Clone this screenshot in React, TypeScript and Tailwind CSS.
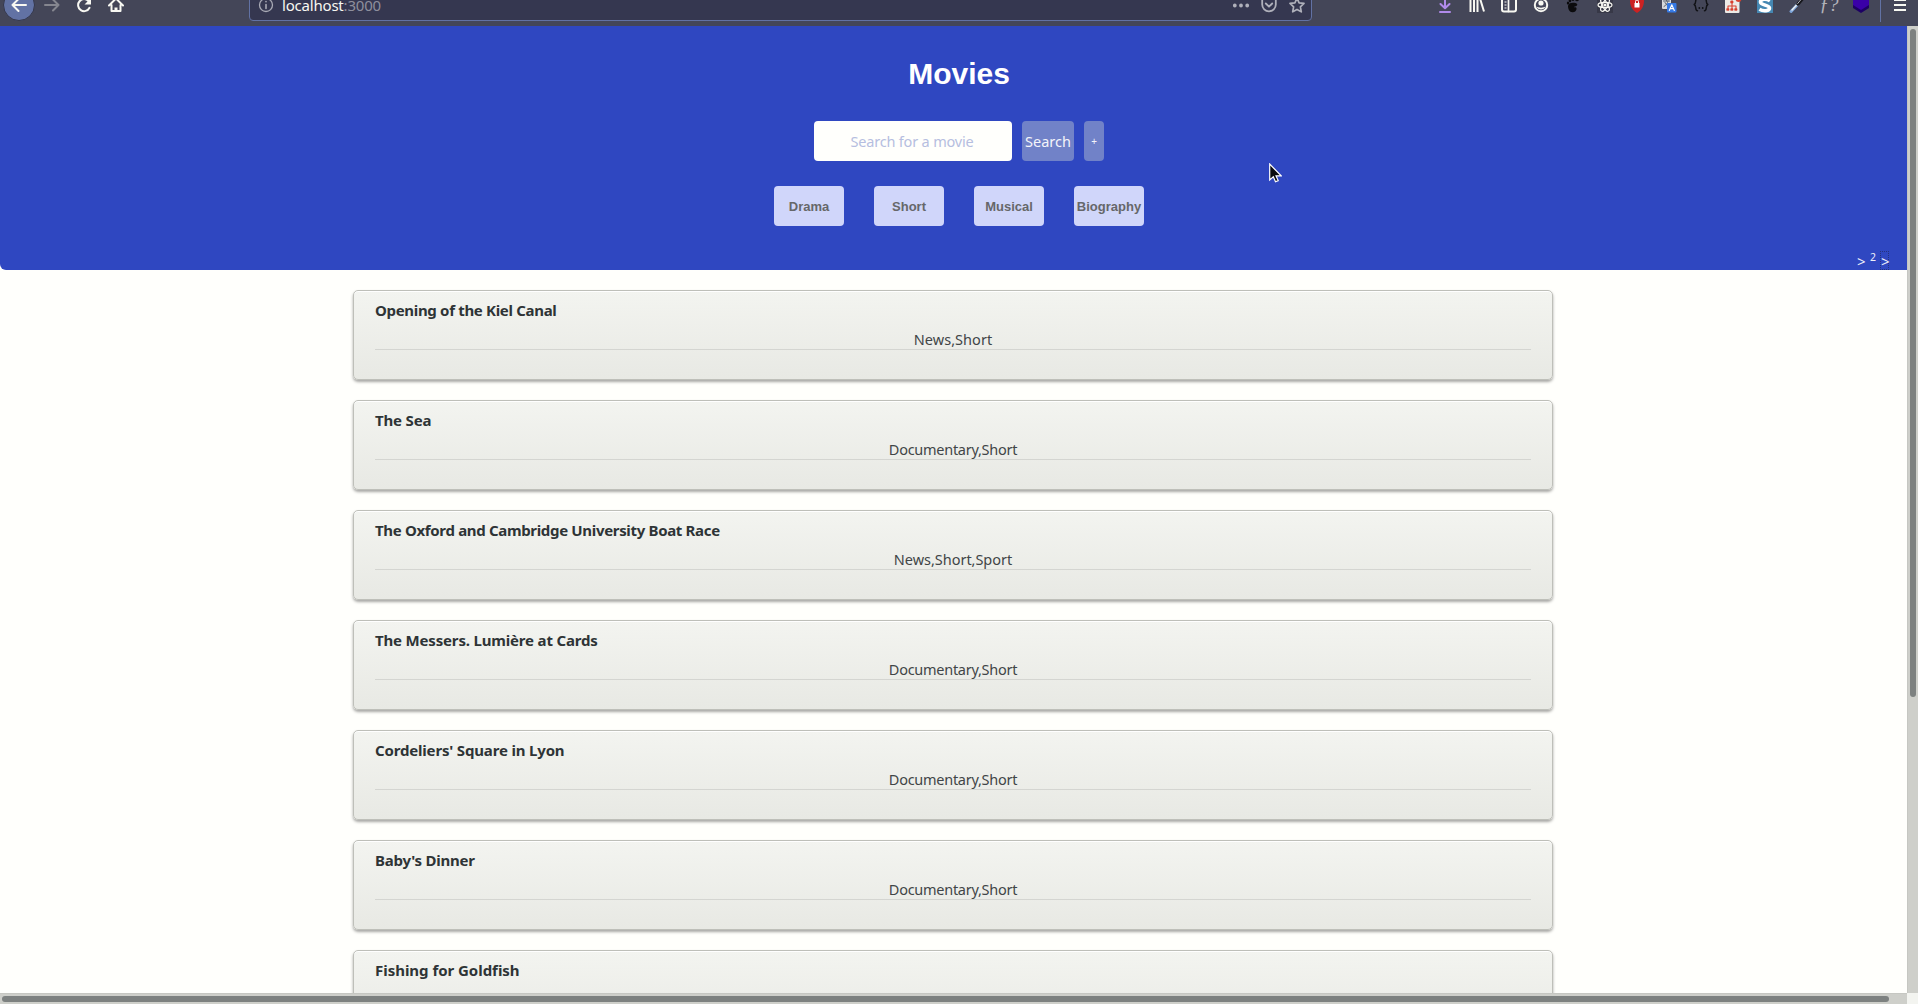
import React from 'react';

type IconProps = { children: React.ReactNode; className?: string };

const Icon = ({ children, className = '' }: IconProps) => (
  <span className={`flex w-8 shrink-0 justify-center ${className}`}>
    <svg
      width="16"
      height="16"
      viewBox="0 0 16 16"
      fill="none"
      stroke="currentColor"
      strokeWidth="2"
      strokeLinecap="round"
      strokeLinejoin="round"
      overflow="visible"
    >
      {children}
    </svg>
  </span>
);

const movies = [
  { title: 'Opening of the Kiel Canal', genres: 'News,Short', fit: 'tracking-[-0.32px]', genreFit: 'tracking-[0.04px]' },
  { title: 'The Sea', genres: 'Documentary,Short', fit: 'tracking-[-0.17px]', genreFit: 'tracking-[-0.27px]' },
  { title: 'The Oxford and Cambridge University Boat Race', genres: 'News,Short,Sport', fit: 'tracking-[-0.33px]', genreFit: 'tracking-[-0.03px]' },
  { title: 'The Messers. Lumière at Cards', genres: 'Documentary,Short', fit: 'tracking-[-0.17px]', genreFit: 'tracking-[-0.27px]' },
  { title: "Cordeliers' Square in Lyon", genres: 'Documentary,Short', fit: 'tracking-[-0.17px]', genreFit: 'tracking-[-0.27px]' },
  { title: "Baby's Dinner", genres: 'Documentary,Short', fit: 'tracking-[-0.25px]', genreFit: 'tracking-[-0.27px]' },
  { title: 'Fishing for Goldfish', genres: 'Documentary,Short', fit: 'tracking-[-0.03px]', genreFit: 'tracking-[-0.27px]' },
];

const genres = ['Drama', 'Short', 'Musical', 'Biography'];

function Toolbar() {
  return (
    <div className="h-[26px] shrink-0 overflow-hidden bg-[#444658]">
      <div className="-mt-[11px] flex h-8 items-center text-[#f8f8f2]">
        <div className="ml-[3px] flex size-8 shrink-0 items-center justify-center rounded-full border border-[#35374a] bg-[#6272a4]">
          <Icon>
            <path d="M15 8H1.500M7.500 2L1.500 8l6 6" />
          </Icon>
        </div>
        <Icon className="ml-[1px] text-[#85868f]">
          <path d="M1 8h13.500M9 2.500L14.500 8 9 13.500" />
        </Icon>
        <Icon>
          <path d="M13.500 10.800A6 6 0 1 1 12.500 4" />
          <path d="M15 1v6.500H8.500z" fill="currentColor" stroke="none" />
        </Icon>
        <Icon>
          <path d="M1 8.500L8 1.500l7 7M3.500 8v6h9V8" />
          <path d="M8 14v-3.500" strokeWidth="3" strokeLinecap="butt" />
        </Icon>
        <div className="ml-[117px] flex h-[31px] w-[1063px] shrink-0 items-center rounded-[4px] border border-[#6272a4] bg-[#353750] pb-px">
          <Icon className="text-[#a9aab5]">
            <circle cx="8" cy="8" r="6.500" strokeWidth="1.300" />
            <path d="M8 7.500v4M8 4.500v.2" strokeWidth="1.600" />
          </Icon>
          <span className="font-['Noto_Sans'] text-[15px] leading-5 tracking-[-0.2px] text-[#f8f8f2]">
            localhost<span className="text-[#8e8f9d]">:3000</span>
          </span>
          <div className="ml-auto flex items-center text-[#afb0ba]">
            <Icon className="!w-7">
              <path d="M1.800 8.500h.01M8 8.500h.01M14.200 8.500h.01" strokeWidth="3.800" />
            </Icon>
            <Icon className="!w-7">
              <path d="M1.200 2h13.600v5.500a6.800 6.800 0 0 1-13.600 0zM4.800 6.500L8 9.700l3.200-3.200" strokeWidth="1.800" />
            </Icon>
            <Icon className="!w-7">
              <path d="M8 1.200l2.100 4.600 4.900.6-3.600 3.400.9 5L8 12.400l-4.300 2.400.9-5L1 6.400l4.900-.6z" strokeWidth="1.700" />
            </Icon>
          </div>
        </div>
        <div className="ml-[117px] flex items-center">
          <Icon className="text-[#b08aea]">
            <path d="M8 0v11M3.500 7L8 11.300 12.500 7M3 15h10" />
          </Icon>
          <Icon>
            <path d="M1.500 1v14M5 1v14M8.500 1v14M11 1.500l4 13" strokeLinecap="butt" />
          </Icon>
          <Icon>
            <rect x="1" y="1" width="14" height="13.500" rx="2" />
            <path d="M7.500 1v13.500" strokeWidth="1.700" />
            <path d="M3.500 5h2M3.500 8h2M3.500 11h2" strokeWidth="1" strokeLinecap="butt" />
          </Icon>
          <Icon>
            <circle cx="8" cy="8" r="6.200" />
            <circle cx="8" cy="6" r="2.600" fill="currentColor" stroke="none" />
            <path d="M3.500 9.500c1.500 1.500 7.500 1.500 9 0-1 4-8 4-9 0z" fill="currentColor" stroke="none" />
          </Icon>
          <Icon className="text-[#0b0b0d]">
            <g fill="currentColor" stroke="none">
              <path d="M3 9c0-3 4-4 7.500-3 3.200 1 1.500 3.300-.5 3.500-1.600.2-1.500 1 .3.700 2.200-.2 1.600 4.800-2.500 5C4.500 15.500 3 12 3 9z" />
              <ellipse cx="3" cy="6" rx="1.200" ry="1.600" />
              <ellipse cx="5" cy="3.600" rx="1.300" ry="1.800" />
              <ellipse cx="8" cy="2" rx="1.500" ry="2" />
              <ellipse cx="12" cy="1.800" rx="2" ry="2.500" />
            </g>
          </Icon>
          <Icon>
            <rect x="0" y="0" width="16" height="16" fill="#373847" stroke="none" />
            <g strokeWidth="1.200">
              <ellipse cx="8" cy="8" rx="7" ry="2.700" />
              <ellipse cx="8" cy="8" rx="7" ry="2.700" transform="rotate(60 8 8)" />
              <ellipse cx="8" cy="8" rx="7" ry="2.700" transform="rotate(120 8 8)" />
            </g>
            <circle cx="8" cy="8" r="1.600" fill="currentColor" stroke="none" />
          </Icon>
          <Icon>
            <path d="M8 0l7 2c.2 6-1.500 11-7 14C2.500 13 .8 8 1 2z" fill="#cc2222" stroke="none" />
            <rect x="5.500" y="6" width="5" height="4.500" fill="#fff" stroke="none" />
            <path d="M6.500 6V4.500a1.500 1.500 0 0 1 3 0V6" stroke="#fff" strokeWidth="1" />
          </Icon>
          <Icon>
            <rect x="1" y="1" width="9" height="11" rx="1" fill="#d8dadd" stroke="none" />
            <path d="M2.500 4h6M5.500 2.500V4M3 9.500c2-1 3.500-3 4-5.500M4 5.500c.8 2 2 3 3.500 3.800" stroke="#5b6470" strokeWidth="1" />
            <rect x="6" y="6" width="9.500" height="9.500" rx="1" fill="#3579e5" stroke="none" />
            <path d="M8.300 13.500l2.500-5.800 2.500 5.800M9.300 11.600h3" stroke="#fff" strokeWidth="1.100" />
          </Icon>
          <Icon className="text-[#111216]">
            <path d="M4.500 1C1.500 1 4 6 1.200 7.500 4 9 1.500 13.700 4.500 13.700M11.500 1c3 0 .5 5 3.300 6.500-2.800 1.500-.3 6.200-3.300 6.200" strokeWidth="1.500" />
            <path d="M6.300 11h.01M9.700 11h.01" strokeWidth="1.800" />
          </Icon>
          <Icon className="text-[#d8412f]">
            <rect x="0" y="0" width="14.500" height="16" rx="1" fill="#eceae6" stroke="none" />
            <path d="M7 4v5M3 12V9h8v3M7 9v3" strokeWidth="1.100" />
            <path d="M6 4h2v2H6zM2 11.700h2v1.600H2zM6 11.700h2v1.600H6zM10 11.700h2v1.600h-2z" fill="currentColor" strokeWidth=".7" />
            <circle cx="13.500" cy="2" r="3" fill="currentColor" stroke="none" />
          </Icon>
          <Icon>
            <rect x="0" y="0" width="16" height="16" fill="#4587b2" stroke="none" />
            <path d="M13 3.800C9 1 3.500 1.800 3.500 5s9 3 9 6-6 3.800-10 1.300" stroke="#fff" strokeWidth="3.600" strokeLinecap="butt" />
          </Icon>
          <Icon>
            <path d="M2 14.500l6.500-7" stroke="#7ea6db" strokeWidth="3" />
            <path d="M3 13l5.500-6" stroke="#eee" strokeWidth="1.400" />
            <path d="M9 7l5-6" stroke="#17181d" strokeWidth="3.500" />
            <path d="M8.700 6.500l4.500-5.500" stroke="#b9bac2" strokeWidth="1" />
          </Icon>
          <span className="w-8 text-center font-['Liberation_Serif'] text-[19px] leading-5 text-[#b3b4ba] italic">ƒ?</span>
          <Icon>
            <path d="M8 3l8 4.500v3.500L8 16l-8-5V7.500z" fill="#1d0064" stroke="none" />
            <path d="M8-2l8 5v5l-8 5-8-5V3z" fill="#3a00a8" stroke="none" />
          </Icon>
        </div>
        <div className="ml-[3px] h-[34px] w-px bg-[#6272a4]" />
        <Icon className="ml-[3px]">
          <path d="M2 3h12M2 8h12M2 13h12" strokeLinecap="butt" />
        </Icon>
      </div>
    </div>
  );
}

function Header() {
  return (
    <header className="relative flex h-[244px] w-[1918px] shrink-0 flex-col items-center rounded-b-[6px] bg-[#2f47c1]">
      <h1 className="mt-[30px] font-['Liberation_Sans'] text-[30px] leading-[36px] font-bold text-white">Movies</h1>
      <div className="mt-[29px] flex h-10 gap-2.5 font-['Noto_Sans'] text-[14.5px] text-[#f4f4fa]">
        <input
          className="w-[198px] rounded-[4px] bg-[#fffffc] pt-[2px] pr-[2px] text-center tracking-[-0.18px] outline-none placeholder:text-[#b6bee0]"
          placeholder="Search for a movie"
        />
        <button className="w-[52px] rounded-[4px] bg-[#7182c8] pt-[2px]">Search</button>
        <button className="w-5 rounded-[4px] bg-[#7182c8] text-[10px]">+</button>
      </div>
      <div className="mt-[25px] flex gap-[30px]">
        {genres.map((genre) => (
          <button
            key={genre}
            className="h-10 w-[70px] rounded-[4px] bg-[#d0d6fa] pt-px font-['Liberation_Sans'] text-[13px] font-bold text-[#666769]"
          >
            {genre}
          </button>
        ))}
      </div>
      <div className="mt-[25px] mr-[29px] flex h-[19px] items-start self-end font-['Noto_Sans'] text-[15px] leading-[20px] text-[#eef0fa]">
        <span className="w-[9px]">&gt;</span>
        <span className="mx-[4px] w-[6px] text-[10.5px] leading-[13px]">2</span>
        <span className="h-[19px] w-[9px] border border-dotted border-[#26327d]">
          <span className="block leading-[18px]">&gt;</span>
        </span>
      </div>
    </header>
  );
}

export default function App() {
  return (
    <div className="relative flex h-[1004px] w-[1918px] flex-col overflow-hidden bg-[#fffffc]">
      <Toolbar />
      <div className="flex min-h-0 flex-1">
        <main className="flex w-[1907px] shrink-0 flex-col overflow-hidden">
          <Header />
          <section className="flex flex-col items-center gap-5 pt-5 pr-px">
            {movies.map((movie) => (
              <article
                key={movie.title}
                className="h-[90px] w-[1200px] shrink-0 rounded-[5px] border border-[#bebfb9] bg-linear-to-b from-[#f3f4f0] to-[#e8e9e4] px-[21px] pt-[7px] font-['Noto_Sans'] shadow-[inset_0_1px_0_#fff,0_2px_3px_rgba(0,0,0,0.35)]"
              >
                <h2 className={`h-[24px] text-[15px] leading-[24px] font-bold text-[#2e3436] ${movie.fit}`}>
                  {movie.title}
                </h2>
                <p className={`mt-[4px] h-[24px] border-b border-[#d4d5d1] text-center text-[14.5px] leading-[26px] text-[#414547] ${movie.genreFit}`}>
                  {movie.genres}
                </p>
              </article>
            ))}
          </section>
        </main>
        <div className="flex w-[11px] shrink-0 justify-center border-l border-[#c6c7c2] bg-[#cecfca] pt-[3px]">
          <div className="h-[668px] w-[6px] rounded-full bg-[#7d8180]" />
        </div>
      </div>
      <div className="flex h-[11px] shrink-0">
        <div className="flex w-[1907px] items-center border-t border-[#c6c7c2] bg-[#cecfca] pl-[2px]">
          <div className="h-[6px] w-[1887px] rounded-full bg-[#7d8180]" />
        </div>
        <div className="flex-1 bg-[#f3f4f0]" />
      </div>
      <svg className="absolute top-[163px] left-[1269px]" width="13" height="20" viewBox="0 0 13 20">
        <path d="M.7 1v16l3.600-3.300 2.200 5 2.700-1.100-2.200-4.800h5.200z" fill="#0b0c10" stroke="#fff" strokeWidth="1.200" />
      </svg>
    </div>
  );
}
